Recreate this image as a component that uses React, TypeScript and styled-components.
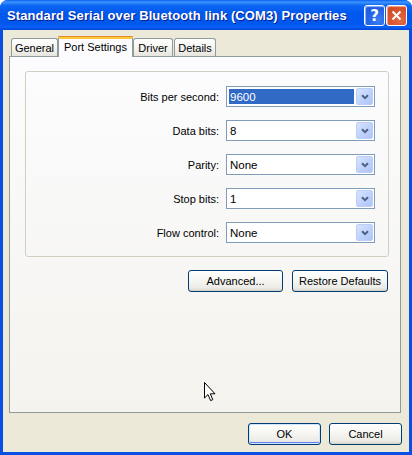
import { Fragment } from "react";
import styled, { createGlobalStyle, css } from "styled-components";

const GlobalStyle = createGlobalStyle`
  html, body {
    margin: 0;
    padding: 0;
    background: #ffffff;
  }

  body {
    font-family: "Liberation Sans", Arial, sans-serif;
    font-size: 11px;
    color: #000000;
  }
`;

const Window = styled.div`
  position: relative;
  box-sizing: border-box;
  display: flex;
  flex-direction: column;

  width: 412px;
  height: 455px;

  background: #0a4ee4;
  border-radius: 8px 8px 0 0;
  padding: 0 3px 3px;
  overflow: hidden;
`;

const TitleBar = styled.div`
  display: flex;
  align-items: center;
  justify-content: space-between;

  height: 30px;
  margin: 0 -3px;
  padding: 0 5px 0 7px;

  background: linear-gradient(
    180deg,
    #0a5ff2 0%,
    #3d95ff 7%,
    #0e66f4 18%,
    #0058ee 45%,
    #0057ec 80%,
    #0a5ff6 90%,
    #0046d8 100%
  );
`;

const Title = styled.span`
  font-family: "Liberation Sans", Arial, sans-serif;
  font-weight: bold;
  font-size: 13px;
  color: #ffffff;
  text-shadow: 1px 1px 0 #0a1e8c;
  white-space: nowrap;
  letter-spacing: 0.1px;
`;

const Controls = styled.div`
  display: flex;
  gap: 1px;
  margin-top: 1px;
`;

const CaptionButton = styled.div<{ $variant: "help" | "close" }>`
  display: flex;
  align-items: center;
  justify-content: center;
  box-sizing: border-box;

  width: 21px;
  height: 21px;
  border: 1px solid #ffffff;
  border-radius: 3px;

  color: #ffffff;
  font-family: "DejaVu Sans", sans-serif;
  font-weight: bold;
  font-size: 15px;

  ${({ $variant }) =>
    $variant === "help"
      ? css`
          background: radial-gradient(
            circle at 70% 75%,
            #3a80f3 0%,
            #2462e6 55%,
            #1b54d8 100%
          );
          box-shadow: inset 1px 1px 1px #8fb6ff;
        `
      : css`
          background: radial-gradient(
            circle at 70% 75%,
            #e26a45 0%,
            #d9532e 55%,
            #c6401c 100%
          );
          box-shadow: inset 1px 1px 1px #f3a88f;
        `}
`;

const Body = styled.div`
  flex: 1;
  display: flex;
  flex-direction: column;

  background: #ece9d8;
  padding: 6px 8px 7px 6px;
`;

const TabStrip = styled.div`
  display: flex;
  align-items: flex-end;
  height: 20px;
  padding-left: 2px;
`;

const Tab = styled.div<{ $active?: boolean; $width: number; $gap?: number }>`
  position: relative;
  box-sizing: border-box;
  display: flex;
  align-items: center;
  justify-content: center;

  width: ${({ $width }) => $width}px;
  margin-left: ${({ $gap = 0 }) => $gap}px;
  white-space: nowrap;

  border: 1px solid #919b9c;
  border-bottom: none;
  border-radius: 3px 3px 0 0;

  ${({ $active }) =>
    $active
      ? css`
          z-index: 1;
          height: 21px;
          margin-bottom: -1px;
          padding-bottom: 3px;
          background: #fcfcfe;
          border-top: 3px solid #ffc83c;
          &::before {
            content: "";
            position: absolute;
            left: -1px;
            right: -1px;
            top: -3px;
            height: 1px;
            background: #e68b2c;
            border-radius: 3px 3px 0 0;
          }
        `
      : css`
          height: 18px;
          padding-top: 1px;
          background: linear-gradient(180deg, #ffffff 0%, #f3f3ef 60%, #e6e4dc 100%);
        `}
`;

const Panel = styled.div`
  box-sizing: border-box;
  display: flex;
  flex-direction: column;

  height: 357px;
  padding: 14px 11px 0 15px;

  border: 1px solid #919b9c;
  background: linear-gradient(180deg, #fcfcfe 0%, #f4f3ee 100%);
`;

const GroupBox = styled.div`
  box-sizing: border-box;
  display: grid;
  grid-template-columns: 1fr 149px;
  grid-auto-rows: 21px;
  align-content: start;
  align-items: center;
  column-gap: 7px;
  row-gap: 13px;

  height: 186px;
  padding: 14px 13px 0 0;

  border: 1px solid #d0d0bf;
  border-radius: 3px;
`;

const Label = styled.label`
  text-align: right;
  white-space: nowrap;
`;

const Combo = styled.div`
  box-sizing: border-box;
  display: flex;
  align-items: center;
  gap: 1px;

  height: 21px;
  padding: 1px;

  background: #ffffff;
  border: 1px solid #7f9db9;
  font-size: 11.5px;
`;

const ComboValue = styled.div<{ $selected?: boolean }>`
  flex: 1;
  display: flex;
  align-items: center;
  align-self: stretch;
  margin: 1px;
  padding-left: 1px;

  ${({ $selected }) =>
    $selected &&
    css`
      background: #316ac5;
      color: #ffffff;
    `}
`;

const DropButton = styled.div`
  box-sizing: border-box;
  display: flex;
  align-items: center;
  justify-content: center;

  width: 17px;
  height: 17px;

  background: linear-gradient(135deg, #d7e4fd 0%, #c0d3fb 50%, #adc5f7 100%);
  border: 1px solid #bccef5;
  border-radius: 2px;
`;

const ButtonRow = styled.div`
  display: flex;
  justify-content: flex-end;
  gap: 9px;
  margin-top: 13px;
  padding-right: 1px;
`;

const Footer = styled.div`
  display: flex;
  justify-content: flex-end;
  gap: 8px;
  margin-top: 10px;
  margin-right: -1px;
`;

const Button = styled.button<{ $width: number; $default?: boolean }>`
  box-sizing: border-box;
  width: ${({ $width }) => $width}px;
  height: 22px;
  padding: 0;

  font-family: "Liberation Sans", Arial, sans-serif;
  font-size: 11px;
  color: #000000;

  border: 1px solid #003c74;
  border-radius: 3px;
  background: linear-gradient(180deg, #ffffff 0%, #f7f7f4 40%, #ecebe6 85%, #d6d0c5 100%);

  ${({ $default }) =>
    $default &&
    css`
      box-shadow: inset 0 0 0 1px #cee7ff, inset 0 -1px 0 1px #6982ee;
    `}
`;

const Cursor = styled.svg`
  position: absolute;
  left: 204px;
  top: 382px;
`;

const Chevron = () => (
  <svg width="8" height="6" viewBox="0 0 8 6">
    <path d="M1 1.2 L4 4.2 L7 1.2" fill="none" stroke="#4d6185" strokeWidth="2" />
  </svg>
);

const settings = [
  { label: "Bits per second:", value: "9600", selected: true },
  { label: "Data bits:", value: "8" },
  { label: "Parity:", value: "None" },
  { label: "Stop bits:", value: "1" },
  { label: "Flow control:", value: "None" },
];

export default function App() {
  return (
    <>
      <GlobalStyle />
      <Window>
        <TitleBar>
          <Title>Standard Serial over Bluetooth link (COM3) Properties</Title>
          <Controls>
            <CaptionButton $variant="help">?</CaptionButton>
            <CaptionButton $variant="close">
              <svg width="11" height="11" viewBox="0 0 11 11">
                <path d="M1.5 1.5 L9.5 9.5 M9.5 1.5 L1.5 9.5" stroke="#ffffff" strokeWidth="2" />
              </svg>
            </CaptionButton>
          </Controls>
        </TitleBar>

        <Body>
          <TabStrip>
            <Tab $width={47}>General</Tab>
            <Tab $width={75} $active>
              Port Settings
            </Tab>
            <Tab $width={40}>Driver</Tab>
            <Tab $width={42} $gap={1}>
              Details
            </Tab>
          </TabStrip>

          <Panel>
            <GroupBox>
              {settings.map((s) => (
                <Fragment key={s.label}>
                  <Label>{s.label}</Label>
                  <Combo>
                    <ComboValue $selected={s.selected}>{s.value}</ComboValue>
                    <DropButton>
                      <Chevron />
                    </DropButton>
                  </Combo>
                </Fragment>
              ))}
            </GroupBox>

            <ButtonRow>
              <Button $width={95}>Advanced...</Button>
              <Button $width={96}>Restore Defaults</Button>
            </ButtonRow>
          </Panel>

          <Footer>
            <Button $width={73} $default>
              OK
            </Button>
            <Button $width={73}>Cancel</Button>
          </Footer>
        </Body>

        <Cursor width="12" height="20" viewBox="0 0 12 20">
          <path
            d="M0.5 0.5 L0.5 16 L4 12.6 L6.6 18.6 L8.8 17.7 L6.3 11.8 L11 11.8 Z"
            fill="#ffffff"
            stroke="#000000"
            strokeWidth="1"
          />
        </Cursor>
      </Window>
    </>
  );
}
